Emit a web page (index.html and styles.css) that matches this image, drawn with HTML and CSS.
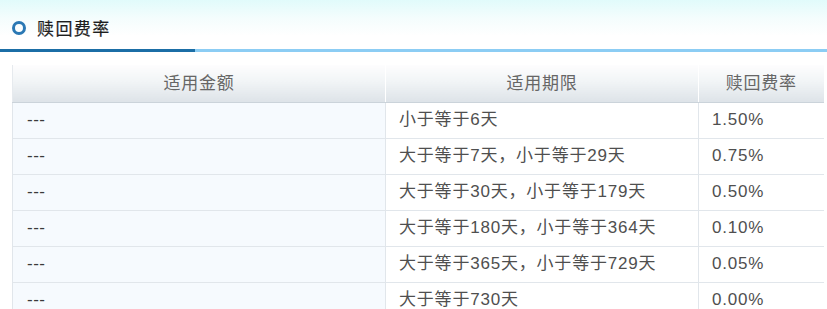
FILE: index.html
```html
<!DOCTYPE html>
<html lang="zh-CN">
<head>
<meta charset="utf-8">
<title>赎回费率</title>
<link rel="stylesheet" href="styles.css">
</head>
<body>
<div class="panel">
  <div class="title-bar">
    <span class="ring"></span>
    <h2 class="title">赎回费率</h2>
  </div>
  <div class="title-line"><span class="line-dark"></span><span class="line-light"></span></div>
  <table class="fee-table">
    <colgroup>
      <col class="c1"><col class="c2"><col class="c3">
    </colgroup>
    <thead>
      <tr><th>适用金额</th><th>适用期限</th><th>赎回费率</th></tr>
    </thead>
    <tbody>
      <tr><td>---</td><td>小于等于6天</td><td>1.50%</td></tr>
      <tr><td>---</td><td>大于等于7天，小于等于29天</td><td>0.75%</td></tr>
      <tr><td>---</td><td>大于等于30天，小于等于179天</td><td>0.50%</td></tr>
      <tr><td>---</td><td>大于等于180天，小于等于364天</td><td>0.10%</td></tr>
      <tr><td>---</td><td>大于等于365天，小于等于729天</td><td>0.05%</td></tr>
      <tr><td>---</td><td>大于等于730天</td><td>0.00%</td></tr>
    </tbody>
  </table>
</div>
</body>
</html>
```
FILE: styles.css
```css
html, body {
  margin: 0;
  padding: 0;
  background: #ffffff;
}
body {
  font-family: "Liberation Sans", Arial, "Noto Sans CJK SC", sans-serif;
  color: #444;
}
.panel {
  width: 827px;
  background: linear-gradient(to bottom, #e1fbfb 0px, #f4fdfd 18px, #ffffff 36px, #ffffff 100%);
  background-repeat: no-repeat;
  background-size: 100% 50px;
}
.title-bar {
  height: 49px;
  display: flex;
  align-items: center;
  padding-left: 12px;
  box-sizing: border-box;
  padding-top: 6px;
}
.ring {
  width: 8px;
  height: 8px;
  border: 3px solid #2a78b4;
  border-radius: 50%;
  flex: none;
}
.title {
  margin: 0 0 0 11px;
  font-size: 17px;
  font-weight: normal;
  letter-spacing: 1.4px;
  color: #1e1e1e;
  font-family: "Noto Sans CJK SC", sans-serif;
  -webkit-text-stroke: 0.2px #1e1e1e;
}
.title-line {
  display: flex;
  height: 3px;
}
.line-dark {
  width: 195px;
  background: #1b6ea6;
}
.line-light {
  flex: 1;
  background: #8ccdf4;
}
.fee-table {
  margin: 13px 0 0 12px;
  width: 811px;
  border-collapse: collapse;
  table-layout: fixed;
  font-size: 17px;
  line-height: 20px;
  letter-spacing: 0.8px;
}
.c1 { width: 373px; }
.c2 { width: 313px; }
.c3 { width: 125px; }
.fee-table th {
  height: 37px;
  padding: 0;
  font-weight: normal;
  color: #666;
  text-align: center;
  background: linear-gradient(to bottom, #fdfdfe 0%, #f1f4f6 45%, #dde3e8 100%);
  border-bottom: 1px solid #cbd3da;
  border-left: 1px solid #ffffff;
}
.fee-table th:first-child {
  border-left: 1px solid #e6eaee;
}
.fee-table td {
  height: 33px;
  padding: 0 0 2px 13px;
  background: #ffffff;
  border-bottom: 1px solid #e1e6eb;
  border-left: 1px solid #e1e6eb;
  color: #4f4f4f;
  white-space: nowrap;
}
.fee-table td:first-child {
  padding-left: 14px;
  background: #f6fafe;
  color: #3a3a3a;
  letter-spacing: 0.5px;
}
```
